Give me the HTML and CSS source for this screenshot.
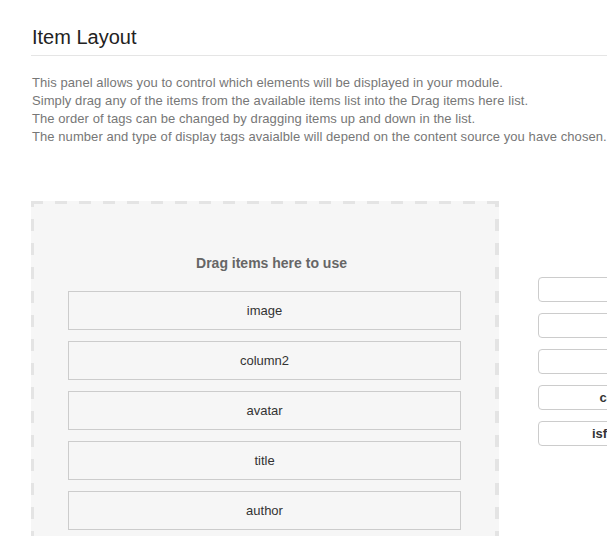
FILE: index.html
```html
<!DOCTYPE html>
<html lang="en">
<head>
<meta charset="utf-8">
<title>Item Layout</title>
<link rel="stylesheet" href="styles.css">
</head>
<body>
<div class="page">
  <h1 class="title">Item Layout</h1>
  <p class="intro">This panel allows you to control which elements will be displayed in your module.<br>Simply drag any of the items from the available items list into the Drag items here list.<br>The order of tags can be changed by dragging items up and down in the list.<br>The number and type of display tags avaialble will depend on the content source you have chosen.</p>
  <div class="layout">
    <div class="dropzone">
      <div class="dropzone-heading">Drag items here to use</div>
      <div class="item">image</div>
      <div class="item">column2</div>
      <div class="item">avatar</div>
      <div class="item">title</div>
      <div class="item">author</div>
      <div class="item">date</div>
    </div>
    <div class="available">
      <div class="tag"></div>
      <div class="tag"></div>
      <div class="tag"></div>
      <div class="tag">content</div>
      <div class="tag">isfeatured</div>
    </div>
  </div>
</div>
</body>
</html>
```

FILE: styles.css
```css
html, body {
  margin: 0;
  padding: 0;
  background: #ffffff;
  overflow: hidden;
}

body {
  font-family: "Liberation Sans", Arial, Helvetica, sans-serif;
  color: #333333;
}

.page {
  width: 1000px;
  padding: 25px 0 0 31px;
}

.title {
  margin: 0;
  font-size: 20px;
  font-weight: normal;
  line-height: 24px;
  color: #222222;
  padding-bottom: 6px;
  border-bottom: 1px solid #e5e5e5;
  padding-left: 1px;
}

.intro {
  margin: 18px 0 0 0;
  font-size: 13px;
  line-height: 18px;
  letter-spacing: 0.07px;
  color: #777777;
  white-space: nowrap;
  padding-left: 1px;
}

.layout {
  display: flex;
  align-items: flex-start;
  margin-top: 55px;
}

.dropzone {
  width: 468px;
  box-sizing: border-box;
  padding: 52px 38px 40px 37px;
  background-color: #f6f6f6;
  background-image:
    repeating-linear-gradient(to right, #e4e4e4 0 12px, transparent 12px 24px),
    repeating-linear-gradient(to bottom, #e4e4e4 0 6px, transparent 6px 18px, #e4e4e4 18px 24px),
    repeating-linear-gradient(to bottom, #e4e4e4 0 6px, transparent 6px 18px, #e4e4e4 18px 24px);
  background-size: 100% 3px, 3px 100%, 4px 100%;
  background-position: left top, left top, right top;
  background-repeat: no-repeat;
}

.dropzone-heading {
  font-size: 14px;
  font-weight: bold;
  line-height: 20px;
  color: #666666;
  text-align: center;
  padding-left: 14px;
  margin-bottom: 18px;
}

.item {
  height: 37px;
  line-height: 37px;
  border: 1px solid #cccccc;
  background: #f6f6f6;
  text-align: center;
  font-size: 13px;
  color: #333333;
  margin-bottom: 11px;
}

.available {
  margin-left: 39px;
  margin-top: 76px;
  width: 170px;
  flex: none;
}

.tag {
  box-sizing: border-box;
  height: 25px;
  line-height: 23px;
  border: 1px solid #cccccc;
  border-radius: 4px;
  background: #ffffff;
  text-align: center;
  font-size: 13px;
  font-weight: bold;
  color: #333333;
  margin-bottom: 11px;
}
```
